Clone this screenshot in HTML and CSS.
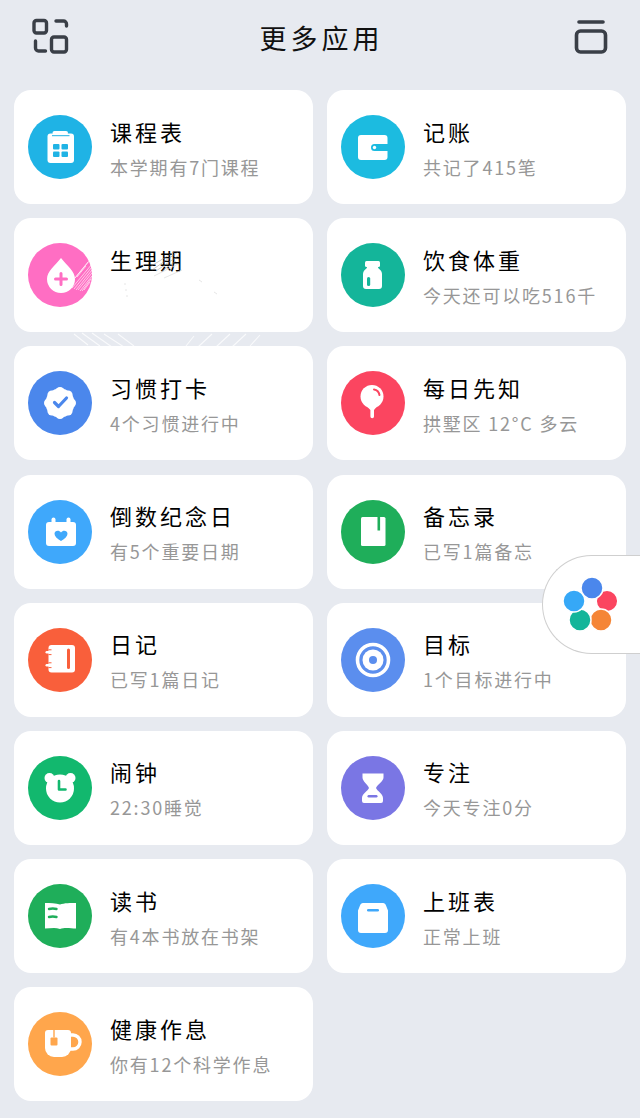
FILE: index.html
```html
<!DOCTYPE html>
<html lang="zh-CN">
<head>
  <meta charset="UTF-8" />
  <title>更多应用</title>
  <link rel="stylesheet" href="styles.css">
</head>
<body>
  <header class="topbar">
    <svg class="top-icon" width="38" height="38" viewBox="0 0 38 38" fill="none" stroke="#3a3f47" stroke-width="3.4" stroke-linejoin="round" stroke-linecap="round">
      <rect x="3" y="2.500" width="12.500" height="12.500" rx="2.500"/>
      <path d="M25 3h7.500a3 3 0 0 1 3 3v2"/>
      <path d="M4.500 23v7a3 3 0 0 0 3 3h7"/>
      <rect x="20.500" y="19" width="15" height="15" rx="2.500"/>
    </svg>
    <h1>更多应用</h1>
    <svg class="top-icon" width="34" height="36" viewBox="0 0 34 36" fill="none" stroke="#3a3f47" stroke-width="3.6" stroke-linecap="round" stroke-linejoin="round">
      <path d="M5 3h24"/>
      <rect x="2.500" y="12" width="29" height="21" rx="4"/>
    </svg>
  </header>

  <main class="grid">
    <div class="card">
      <svg class="icon" viewBox="0 0 64 64">
        <circle cx="32" cy="32" r="32" fill="#1fb3e5"/>
        <rect x="24.500" y="16" width="15.500" height="4" rx="2" fill="#fff"/>
        <rect x="19.500" y="18.500" width="26.500" height="29.500" rx="3" fill="#fff"/>
        <path d="M24 20.700h17.500" stroke="#1fb3e5" stroke-width="1"/>
        <rect x="25" y="29" width="6.500" height="5.500" rx="1" fill="#1fb3e5"/>
        <rect x="33.500" y="29" width="6.500" height="5.500" rx="1" fill="#1fb3e5"/>
        <rect x="25" y="36.500" width="6.500" height="5.500" rx="1" fill="#1fb3e5"/>
        <rect x="33.500" y="36.500" width="6.500" height="5.500" rx="1" fill="#1fb3e5"/>
      </svg>
      <div class="text"><div class="title">课程表</div><div class="sub">本学期有7门课程</div></div>
    </div>

    <div class="card">
      <svg class="icon" viewBox="0 0 64 64">
        <circle cx="32" cy="32" r="32" fill="#1cbbe0"/>
        <rect x="17" y="20" width="29.500" height="25" rx="3" fill="#fff"/>
        <path d="M47 29h-13.500a3.500 3.500 0 0 0 0 7H47z" fill="#1cbbe0"/>
        <circle cx="33.500" cy="32.500" r="1.700" fill="#fff"/>
      </svg>
      <div class="text"><div class="title">记账</div><div class="sub">共记了415笔</div></div>
    </div>

    <div class="card">
      <svg class="icon" viewBox="0 0 64 64">
        <circle cx="32" cy="32" r="32" fill="#ff6ec3"/>
        <path d="M33 15C27 23 19 28 19 36a14 14 0 0 0 28 0C47 28 39 23 33 15z" fill="#fff"/>
        <path d="M33 30.500v11M27.500 36h11" stroke="#ff6ec3" stroke-width="3" stroke-linecap="round"/>
      </svg>
      <div class="text"><div class="title">生理期</div><div class="sub">&nbsp;</div></div>
      <svg class="smudge" width="299" height="130" viewBox="0 0 299 130" fill="none">
        <g stroke="#fff" stroke-width=".9" opacity=".7">
          <path d="M78 46l-20 24M78 49l-18 22M78 52l-16 20M78 55l-14 17M78 58l-12 15M77 61l-9 12M76 64l-6 8M76 42l-15 18M74 44l-13 16M72 48l-9 11"/>
        </g>
        <g stroke="#8f8f8f" stroke-width=".8" opacity=".6">
          <path d="M134 50l26-16M138 52l26-18M142 53l22-15M148 53l14-10"/>
        </g>
        <g stroke="#dcdcdc" stroke-width="1" opacity=".7">
          <path d="M140 58l24-12M150 60l18-8M110 66h2M111 72h2M112 78h2M185 62l3 2M200 74l3 2"/>
        </g>
        <g stroke="#fff" stroke-width="1.100" opacity=".75">
          <path d="M60 116l14 11M68 115l18 13M78 115l20 14M90 116l20 13M104 116l16 12M180 118l-8 10M198 116l-14 13M216 116l-14 13M232 116l-14 13M246 117l-10 11"/>
        </g>
      </svg>
    </div>

    <div class="card">
      <svg class="icon" viewBox="0 0 64 64">
        <circle cx="32" cy="32" r="32" fill="#14b59a"/>
        <rect x="24" y="18" width="15" height="6" rx="1.500" fill="#fff"/>
        <path d="M26 24h11c0 2 4 3 4 7v12a3 3 0 0 1-3 3H25a3 3 0 0 1-3-3V31c0-4 4-5 4-7z" fill="#fff"/>
        <rect x="26" y="34" width="3.200" height="9" rx="1.600" fill="#14b59a"/>
      </svg>
      <div class="text"><div class="title">饮食体重</div><div class="sub">今天还可以吃516千</div></div>
    </div>

    <div class="card">
      <svg class="icon" viewBox="0 0 64 64">
        <circle cx="32" cy="32" r="32" fill="#4b87ec"/>
        <g fill="#fff">
          <circle cx="32" cy="32" r="14.500"/>
          <circle cx="32" cy="20.500" r="4.500"/>
          <circle cx="40.100" cy="23.900" r="4.500"/>
          <circle cx="43.500" cy="32" r="4.500"/>
          <circle cx="40.100" cy="40.100" r="4.500"/>
          <circle cx="32" cy="43.500" r="4.500"/>
          <circle cx="23.900" cy="40.100" r="4.500"/>
          <circle cx="20.500" cy="32" r="4.500"/>
          <circle cx="23.900" cy="23.900" r="4.500"/>
        </g>
        <path d="M26.500 31.500l4 4 8-8.500" fill="none" stroke="#4b87ec" stroke-width="3.200" stroke-linecap="round" stroke-linejoin="round"/>
      </svg>
      <div class="text"><div class="title">习惯打卡</div><div class="sub">4个习惯进行中</div></div>
    </div>

    <div class="card">
      <svg class="icon" viewBox="0 0 64 64">
        <circle cx="32" cy="32" r="32" fill="#fb4560"/>
        <circle cx="31" cy="25.500" r="11.500" fill="#fff"/>
        <path d="M26.500 36h9l-2.500 3v6.500a1.800 1.800 0 0 1-3.600 0V39z" fill="#fff"/>
        <path d="M33 18.500c3 .5 5 2.500 5.500 5.500" fill="none" stroke="#fb4560" stroke-width="2" stroke-linecap="round"/>
      </svg>
      <div class="text"><div class="title">每日先知</div><div class="sub">拱墅区 12°C 多云</div></div>
    </div>

    <div class="card">
      <svg class="icon" viewBox="0 0 64 64">
        <circle cx="32" cy="32" r="32" fill="#3fa8fb"/>
        <rect x="18" y="22" width="30" height="24" rx="3" fill="#fff"/>
        <rect x="23.500" y="17.500" width="4" height="7" rx="2" fill="#fff"/>
        <rect x="38.500" y="17.500" width="4" height="7" rx="2" fill="#fff"/>
        <path d="M33 41c-4-2.500-6.500-4.600-6.500-7.200 0-3.200 4.500-4 6.500-1.300 2-2.700 6.500-1.900 6.500 1.300C39.500 36.400 37 38.500 33 41z" fill="#3fa8fb"/>
      </svg>
      <div class="text"><div class="title">倒数纪念日</div><div class="sub">有5个重要日期</div></div>
    </div>

    <div class="card">
      <svg class="icon" viewBox="0 0 64 64">
        <circle cx="32" cy="32" r="32" fill="#1fae5a"/>
        <rect x="20" y="17" width="24.500" height="29" rx="1.500" fill="#fff"/>
        <rect x="36.500" y="17" width="2.600" height="13.500" fill="#1fae5a"/>
      </svg>
      <div class="text"><div class="title">备忘录</div><div class="sub">已写1篇备忘</div></div>
    </div>

    <div class="card">
      <svg class="icon" viewBox="0 0 64 64">
        <circle cx="32" cy="32" r="32" fill="#f95f3b"/>
        <rect x="20.500" y="17" width="26.500" height="27.500" rx="3" fill="#fff"/>
        <rect x="39" y="20.500" width="3" height="20.500" rx="1.500" fill="#f95f3b"/>
        <rect x="17.500" y="23" width="5" height="2.400" rx="1.200" fill="#fff"/>
        <rect x="17.500" y="36" width="5" height="2.400" rx="1.200" fill="#fff"/>
        <path d="M20.500 21.800h3M20.500 26.600h3M20.500 34.800h3M20.500 39.600h3" stroke="#f95f3b" stroke-width="1"/>
      </svg>
      <div class="text"><div class="title">日记</div><div class="sub">已写1篇日记</div></div>
    </div>

    <div class="card">
      <svg class="icon" viewBox="0 0 64 64">
        <circle cx="32" cy="32" r="32" fill="#5b8eee"/>
        <circle cx="32" cy="32" r="15.500" fill="none" stroke="#fff" stroke-width="3.600"/>
        <circle cx="32" cy="32" r="10.500" fill="#fff"/>
        <circle cx="32" cy="32" r="4" fill="#5b8eee"/>
      </svg>
      <div class="text"><div class="title">目标</div><div class="sub">1个目标进行中</div></div>
    </div>

    <div class="card">
      <svg class="icon" viewBox="0 0 64 64">
        <circle cx="32" cy="32" r="32" fill="#12b86e"/>
        <circle cx="21.500" cy="22" r="5" fill="#fff"/>
        <circle cx="42.500" cy="22" r="5" fill="#fff"/>
        <circle cx="32" cy="32.500" r="14" fill="#fff"/>
        <path d="M31 25v8.500h6.500" fill="none" stroke="#12b86e" stroke-width="2.600" stroke-linecap="round" stroke-linejoin="round"/>
      </svg>
      <div class="text"><div class="title">闹钟</div><div class="sub">22:30睡觉</div></div>
    </div>

    <div class="card">
      <svg class="icon" viewBox="0 0 64 64">
        <circle cx="32" cy="32" r="32" fill="#7a76e4"/>
        <path d="M21.500 17.500h21v4c0 4-6.500 7-7.500 10.500 1 3 7 5.500 7 10v3a2 2 0 0 1-2 2H23a2 2 0 0 1-2-2v-3c0-4.500 6-7 7-10-1-3.500-6.500-6.500-6.500-10.500z" fill="#fff"/>
        <rect x="26.500" y="39" width="10" height="2.500" rx="1.200" fill="#7a76e4"/>
      </svg>
      <div class="text"><div class="title">专注</div><div class="sub">今天专注0分</div></div>
    </div>

    <div class="card">
      <svg class="icon" viewBox="0 0 64 64">
        <circle cx="32" cy="32" r="32" fill="#1fae5a"/>
        <path d="M17 19c5 0 11 0 15 1.500C36 19 43 19 48 19v25.500c-5 0-11-1.500-16 .5-5-2-10-.5-15-.5z" fill="#fff"/>
        <path d="M21 25c2.500-.7 5-.7 7.500 0M21 33c2.500-.7 5-.7 7.500 0" fill="none" stroke="#1fae5a" stroke-width="2.400" stroke-linecap="round"/>
      </svg>
      <div class="text"><div class="title">读书</div><div class="sub">有4本书放在书架</div></div>
    </div>

    <div class="card">
      <svg class="icon" viewBox="0 0 64 64">
        <circle cx="32" cy="32" r="32" fill="#3fa8fb"/>
        <path d="M22 19h20c1.500 0 2.500 1 3 2.500l2 5V46a3 3 0 0 1-3 3H20a3 3 0 0 1-3-3V26.500l2-5c.5-1.500 1.500-2.500 3-2.500z" fill="#fff"/>
        <rect x="26" y="25" width="12" height="2.600" rx="1.300" fill="#3fa8fb"/>
      </svg>
      <div class="text"><div class="title">上班表</div><div class="sub">正常上班</div></div>
    </div>

    <div class="card">
      <svg class="icon" viewBox="0 0 64 64">
        <circle cx="32" cy="32" r="32" fill="#ffa64c"/>
        <path d="M17 21a3 3 0 0 1 3-3h20a3 3 0 0 1 3 3v15a9 9 0 0 1-9 9H26a9 9 0 0 1-9-9z" fill="#fff"/>
        <path d="M43 23h2a5.500 5.500 0 0 1 0 14h-3" fill="none" stroke="#fff" stroke-width="3.400"/>
        <path d="M26 17.500v8" stroke="#ffa64c" stroke-width="1.400"/>
        <rect x="22.500" y="25.500" width="7" height="8" rx="1" fill="#ffa64c"/>
      </svg>
      <div class="text"><div class="title">健康作息</div><div class="sub">你有12个科学作息</div></div>
    </div>
  </main>

  <aside class="bubble">
    <svg width="70" height="64" viewBox="0 0 70 64" stroke="#fff" stroke-width="1.500">
      <circle cx="49" cy="27" r="10.800" fill="#fb4560"/>
      <circle cx="43" cy="46" r="11" fill="#f58536"/>
      <circle cx="22" cy="46" r="11" fill="#14b59a"/>
      <circle cx="16" cy="27" r="11" fill="#36a8f7"/>
      <circle cx="34" cy="14" r="11" fill="#4b87ec"/>
    </svg>
  </aside>
</body>
</html>
```

FILE: styles.css
```css
body {
  margin: 0;
  background: #e7eaf0;
  font-family: "Noto Sans CJK SC", "Noto Sans", sans-serif;
  height: 1118px;
  overflow: hidden;
  position: relative;
}

.topbar {
  height: 90px;
  box-sizing: border-box;
  padding: 0 32px 16px 31px;
  display: flex;
  align-items: center;
  justify-content: space-between;
}
.topbar h1 {
  margin: 0;
  font-size: 27px;
  font-weight: 400;
  letter-spacing: 4px;
  color: #111;
}
.top-icon {
  display: block;
}

.grid {
  display: grid;
  grid-template-columns: 299px 299px;
  grid-auto-rows: 114px;
  column-gap: 14px;
  row-gap: 14.2px;
  padding: 0 14px;
}

.card {
  position: relative;
  background: #fff;
  border-radius: 17px;
  padding-left: 14px;
  display: flex;
  align-items: center;
  gap: 18px;
}
.icon {
  width: 64px;
  height: 64px;
  flex: none;
}

.title {
  font-size: 22px;
  line-height: 32px;
  letter-spacing: 3px;
  color: #000;
}
.sub {
  font-size: 18px;
  line-height: 26px;
  letter-spacing: 1.8px;
  color: #979797;
  margin-top: 7px;
}

.smudge {
  position: absolute;
  left: 0;
  top: 0;
}

.bubble {
  position: absolute;
  left: 542px;
  top: 555px;
  width: 98px;
  height: 99px;
  box-sizing: border-box;
  background: #fff;
  border: 1px solid #cfcfcf;
  border-right: none;
  border-radius: 50px 0 0 50px;
  padding: 18px 0 0 15px;
}
.bubble svg {
  display: block;
}
```
